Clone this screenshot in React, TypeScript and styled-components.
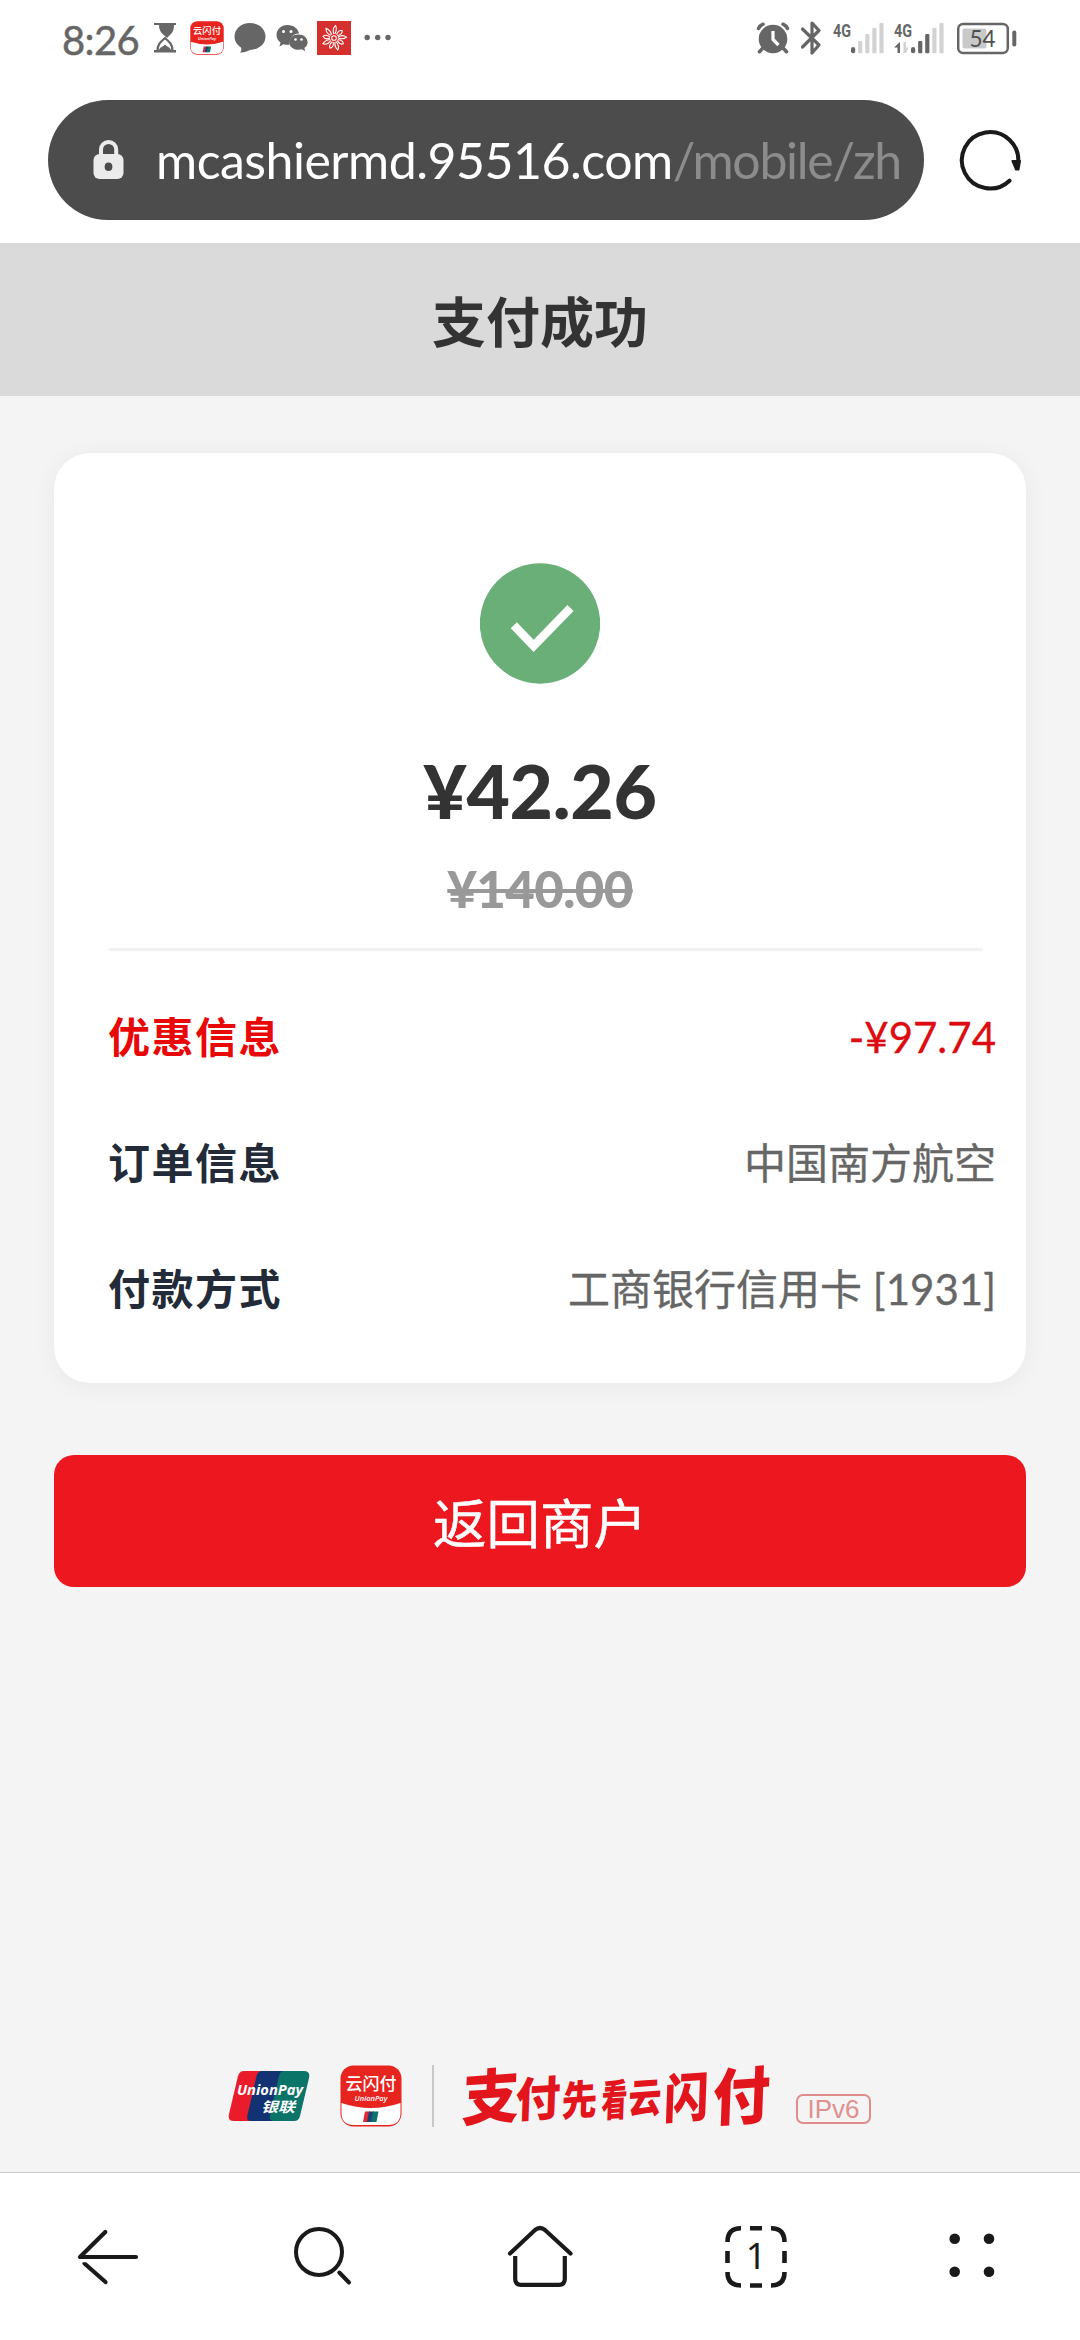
import React from "react";
import styled, { createGlobalStyle } from "styled-components";

const GlobalStyle = createGlobalStyle`
  * { box-sizing: border-box; }
  html, body { margin: 0; padding: 0; background: #f4f4f4; }
  body { font-family: Lato, "Noto Sans CJK SC", sans-serif; }
`;

const ink = "#1a1a1a";
const gray = "#666";
const faint = "#d2d2d2";

const Screen = styled.div`
  width: 1080px;
  height: 2340px;
  display: flex;
  flex-direction: column;
  background: #f4f4f4;
  overflow: hidden;
`;

const StatusBar = styled.div`
  height: 76px;
  flex: none;
  display: flex;
  align-items: center;
  justify-content: space-between;
  padding: 0 62px 0 61px;
  background: #fff;
`;

const StatusGroup = styled.div`
  display: flex;
  align-items: center;
`;

const Clock = styled.span`
  width: 81px;
  margin-right: 11px;
  font-size: 40px;
  line-height: 40px;
  letter-spacing: -0.6px;
  color: ${gray};
  -webkit-text-stroke: 0.5px ${gray};
  padding: 3px 0 0 1px;
`;

const Glyph = styled.svg<{ $w: number; $h: number; $gap?: number }>`
  display: block;
  flex: none;
  width: ${(p) => p.$w}px;
  height: ${(p) => p.$h}px;
  margin-right: ${(p) => p.$gap ?? 0}px;
`;

const AddressRow = styled.div`
  height: 167px;
  flex: none;
  display: flex;
  align-items: center;
  gap: 34px;
  padding: 0 48px;
  background: #fff;
`;

const AddressPill = styled.div`
  width: 876px;
  height: 120px;
  display: flex;
  align-items: center;
  padding-left: 45px;
  border-radius: 60px;
  background: #4c4c4c;
`;

const Url = styled.div`
  margin-left: 32px;
  padding-top: 1px;
  font-size: 50px;
  line-height: 60px;
  letter-spacing: -0.5px;
  white-space: nowrap;
  color: #fff;
`;

const UrlPath = styled.span`
  letter-spacing: -1.3px;
  color: #8c8c8c;
`;

const TitleBar = styled.header`
  height: 153px;
  flex: none;
  display: flex;
  align-items: center;
  justify-content: center;
  padding-top: 7px;
  background: #dadada;
  color: #333;
  font-size: 54px;
  line-height: 60px;
  font-weight: 700;
`;

const Content = styled.main`
  flex: 1;
  display: flex;
  flex-direction: column;
  padding: 57px 54px 0;
`;

const Card = styled.section`
  height: 930px;
  flex: none;
  display: flex;
  flex-direction: column;
  align-items: center;
  padding: 110px 30px 0 55px;
  border-radius: 36px;
  background: #fff;
  box-shadow: 0 3px 24px rgba(0, 0, 0, 0.05);
`;

const Summary = styled.div`
  align-self: stretch;
  display: flex;
  flex-direction: column;
  align-items: center;
  height: 385px;
  padding-right: 25px;
  flex: none;
`;

const Amount = styled.div`
  margin-top: 61px;
  font-size: 75px;
  line-height: 90px;
  font-weight: 900;
  letter-spacing: -0.3px;
  color: #333;
`;

const OriginalAmount = styled.div`
  margin-top: 24px;
  font-size: 51px;
  line-height: 60px;
  font-weight: 900;
  letter-spacing: -0.6px;
  color: #999;
  text-decoration: line-through;
  text-decoration-thickness: 4px;
`;

const Divider = styled.hr`
  align-self: flex-start;
  width: 874px;
  height: 3px;
  flex: none;
  margin: 0 0 23px;
  border: 0;
  background: #f2f2f2;
`;

const InfoRow = styled.div<{ $accent?: boolean }>`
  align-self: stretch;
  height: 126px;
  display: flex;
  align-items: center;
  justify-content: space-between;
  line-height: 60px;
  font-size: 42px;
  color: ${(p) => (p.$accent ? "#dc0c12" : gray)};
`;

const InfoLabel = styled.span<{ $accent?: boolean }>`
  margin-left: -1px;
  font-weight: 700;
  letter-spacing: 1.5px;
  color: ${(p) => (p.$accent ? "#e80808" : "#222b37")};
`;

const InfoValue = styled.span`
  -webkit-text-stroke: 0.3px currentColor;
`;

const ReturnButton = styled.button`
  height: 132px;
  flex: none;
  margin-top: 72px;
  padding: 4px 0 0;
  border: 0;
  border-radius: 20px;
  background: #ed181f;
  color: #fff;
  font: 400 53.500px/60px Lato, "Noto Sans CJK SC", sans-serif;
  -webkit-text-stroke: 0.5px #fff;
`;

const Brand = styled.footer`
  height: 62px;
  display: flex;
  align-items: center;
  margin: auto 0 45px 174px;
`;

const BrandRule = styled.div`
  width: 2px;
  height: 62px;
  margin: 0 30px 0 30px;
  background: #c8c8c8;
`;

const Slogan = styled.div`
  width: 308px;
  height: 62px;
  display: flex;
  align-items: center;
`;

const Brush = styled.span<{ $size: number; $w: number; $drop: number; $narrow: number }>`
  width: ${(p) => p.$w}px;
  display: flex;
  justify-content: center;
  font-size: ${(p) => p.$size}px;
  line-height: 62px;
  font-weight: 900;
  color: #e2151d;
  white-space: nowrap;
  transform: translateY(${(p) => p.$drop}px) skewX(-6deg) rotate(-4deg) scaleX(${(p) => p.$narrow});
`;

const Ipv6 = styled.span`
  width: 75px;
  height: 30px;
  align-self: flex-end;
  margin: 0 0 3px 24px;
  display: flex;
  align-items: center;
  justify-content: center;
  border: 2px solid #e08c8c;
  border-radius: 7px;
  color: #e09090;
  font: 400 26px/28px "Liberation Sans", Arial, sans-serif;
`;

const NavBar = styled.nav`
  height: 168px;
  flex: none;
  display: grid;
  grid-template-columns: repeat(5, 216px);
  align-items: center;
  justify-items: center;
  border-top: 1px solid #ccc;
  background: #fff;
`;

const brushes = [
  { ch: "支", size: 60, w: 54, drop: 0, narrow: 0.95 },
  { ch: "付", size: 47, w: 40, drop: 2, narrow: 0.95 },
  { ch: "先", size: 41, w: 43, drop: 4, narrow: 0.86 },
  { ch: "看", size: 43, w: 27, drop: 4, narrow: 0.6 },
  { ch: "云", size: 41, w: 34, drop: 2, narrow: 0.8 },
  { ch: "闪", size: 53, w: 49, drop: 1, narrow: 0.84 },
  { ch: "付", size: 62, w: 61, drop: -1, narrow: 0.92 },
];

const rows = [
  { label: "优惠信息", value: "-¥97.74", accent: true },
  { label: "订单信息", value: "中国南方航空" },
  { label: "付款方式", value: "工商银行信用卡 [1931]" },
];

const Hourglass = () => (
  <Glyph $w={24} $h={34} $gap={13} viewBox="153 21 24 34">
    <path d="M154 23h22v2h-2c0 7-3 9-7 13-4-4-8-6-8-13h-5z" fill={gray} />
    <path d="M157.500 51c0-7 3-9 7.500-13 4.500 4 7.500 6 7.500 13" fill="none" stroke={gray} strokeWidth="2.200" />
    <path d="M159 50c1-3 4-3 6-5.500 2 2.500 5 2.500 6 5.500zM154 50h22v2.500h-22z" fill={gray} />
  </Glyph>
);

const CloudPay = ({ size, gap }: { size: number; gap?: number }) => (
  <Glyph $w={size} $h={size} $gap={gap} viewBox="0 0 62 62">
    <rect x="0.500" y="0.500" width="61" height="61" rx="13" fill="#e8241f" />
    <path d="M1.500 38Q31 48 60.500 38V48Q60.500 60 48 60H14Q1.500 60 1.500 48Z" fill="#fff" />
    <text x="31" y="24.500" textAnchor="middle" fontFamily="Noto Sans CJK SC" fontSize="17" fontWeight="500" fill="#fff">云闪付</text>
    <text x="31" y="35.500" textAnchor="middle" fontFamily="Open Sans" fontStyle="italic" fontWeight="600" fontSize="7.500" fill="#fff">UnionPay</text>
    <path d="M25 46.500h5l-2 10.500h-5z" fill="#e02a35" />
    <path d="M29 46.500h5l-2 10.500h-5z" fill="#1d3f77" />
    <path d="M33 46.500h5.500l-2 10.500H31z" fill="#0b7468" />
  </Glyph>
);

const Bubble = () => (
  <Glyph $w={32} $h={34} $gap={10} viewBox="233.500 21 32 34">
    <path d="M249.500 23C258.500 23 265 29 265 36.500S258.500 49.500 249.500 50C246 51.500 243 53 239.500 52.500C241 51 241 49.500 240.500 47.500C236.500 45 234 41 234 36.500C234 29 240.500 23 249.500 23Z" fill={gray} />
  </Glyph>
);

const WeChat = () => (
  <Glyph $w={32} $h={34} $gap={9} viewBox="275 21 32 34">
    <path d="M286.500 25C280 25 275.500 29.500 275.500 35c0 3 1.500 5.500 4 7.500l-1 4 4-2.200c2 .5 4 .7 6 .4-1-7 5-11.700 9.500-11.200C297 28.500 292.500 25 286.500 25Z" fill={gray} />
    <path d="M297.500 34.500c-5.500 0-9.300 3.500-9.300 7.700s3.800 7.600 9.300 7.600c1.200 0 2.400-.2 3.400-.5l3.300 1.900-.8-3.200c2-1.500 3.200-3.400 3.200-5.800 0-4.200-3.800-7.700-9.100-7.700Z" fill={gray} />
    <g fill="#fff"><circle cx="282.500" cy="31.500" r="1.500" /><circle cx="290" cy="31.500" r="1.500" /><circle cx="294.500" cy="39.500" r="1.300" /><circle cx="300.500" cy="39.500" r="1.300" /></g>
  </Glyph>
);

const Flower = () => (
  <Glyph $w={34} $h={34} $gap={13} viewBox="-17 -17 34 34">
    <rect x="-17" y="-17" width="34" height="34" fill="#d5302d" />
    <g fill="none" stroke="#fff" strokeWidth="1.100">
      {[5, 48, 84, 122, 160, 200, 240, 278, 318].map((a, i) => (
        <path key={a} transform={`rotate(${a})`} d={i % 2 ? "M-.5-4C-2.500-7-2-9.500 0-11C2-9.500 2-7 .5-4" : "M-.5-4C-2-7-2-10 .5-12.500C2-10 1.800-7 .5-4"} />
      ))}
      <circle r="2.300" />
    </g>
  </Glyph>
);

const More = () => (
  <Glyph $w={28} $h={34} viewBox="363 21 28 34">
    <g fill={gray}><circle cx="366.200" cy="37.500" r="2.700" /><circle cx="376.700" cy="37.500" r="2.700" /><circle cx="387" cy="37.500" r="2.700" /></g>
  </Glyph>
);

const Alarm = () => (
  <Glyph $w={34} $h={36} $gap={10} viewBox="756 19 34 36">
    <circle cx="773" cy="38" r="14.300" fill={gray} />
    <path d="M758.500 27.500q1.500-3 4.500-4.300M787.500 27.500q-1.500-3-4.500-4.300M762.500 47.500l-3 3.200M783.500 47.500l3 3.200" fill="none" stroke={gray} strokeWidth="3.500" strokeLinecap="round" />
    <path d="M773 30v8.500l5.500 5.500" fill="none" stroke="#fff" strokeWidth="3.200" strokeLinejoin="round" />
  </Glyph>
);

const Bluetooth = () => (
  <Glyph $w={22} $h={36} $gap={11} viewBox="800 19 22 36">
    <path d="M802.500 28l16.500 16-7 8V22l7 7.500-16.500 16.500" fill="none" stroke={gray} strokeWidth="3.200" strokeLinejoin="round" strokeLinecap="round" />
  </Glyph>
);

const barTops = [46, 40, 33, 27, 22];

const Signal = ({ lit, start, data, gap }: { lit: number; start: number; data?: boolean; gap: number }) => (
  <Glyph $w={start + 33} $h={36} $gap={gap} viewBox={`0 19 ${start + 33} 36`}>
    <text x="0" y="35.500" fontFamily="Roboto" fontWeight="700" fontSize="18.500" textLength="18" lengthAdjust="spacingAndGlyphs" fill={gray}>4G</text>
    {data && <path d="M6 41v11H3.500v-5.500H0z" fill={gray} />}
    {data && <path d="M9.500 41v11H12l2.500-5.500h-2.500v-5.500z" fill={faint} />}
    {barTops.map((top, i) => (
      <rect key={top} x={start + i * 7.100} y={top} width="4.200" height={52.300 - top} rx={i === 0 ? 2.100 : 1} fill={i < lit ? gray : faint} />
    ))}
  </Glyph>
);

const Battery = () => (
  <Glyph $w={61} $h={36} viewBox="957 19 61 36">
    <rect x="958.200" y="23" width="49.600" height="29" rx="5" fill="none" stroke={gray} strokeWidth="2.500" />
    <rect x="962.500" y="27.500" width="24" height="20" rx="2" fill="#c9c9c9" />
    <rect x="1012.300" y="29.500" width="4" height="16" rx="1.800" fill={gray} />
    <text x="982.500" y="45.800" textAnchor="middle" fontFamily="Lato" fontSize="22.500" fill="#505050">54</text>
  </Glyph>
);

const Lock = () => (
  <Glyph $w={31} $h={42} viewBox="93 139 31 42">
    <path d="M101 156v-6.500a7.600 7.600 0 0 1 15.200 0v6.500" fill="none" stroke="#ebebeb" strokeWidth="4" />
    <path d="M99.500 154h18a6 6 0 0 1 6 6v13a6 6 0 0 1-6 6h-18a6 6 0 0 1-6-6v-13a6 6 0 0 1 6-6z" fill="#ebebeb" />
    <rect x="104.700" y="162.500" width="7.600" height="8.600" rx="3.800" fill="#4c4c4c" />
  </Glyph>
);

const Reload = () => (
  <Glyph $w={64} $h={64} viewBox="958 127 64 64">
    <path d="M1009.500 179.700A28.200 28.200 0 1 1 1018 163" fill="none" stroke={ink} strokeWidth="4" strokeLinecap="round" />
    <path d="M1012.500 160h7.500l-1.500 8.500-2.500 0z" fill={ink} stroke={ink} strokeWidth="2" strokeLinejoin="round" />
  </Glyph>
);

const Success = () => (
  <Glyph $w={120} $h={121} viewBox="480 563 120 121">
    <circle cx="540" cy="623.500" r="60.200" fill="#6aaf78" />
    <path d="M513.800 625.300L533.600 646L570.500 608" fill="none" stroke="#fff" strokeWidth="8.500" />
  </Glyph>
);

const UnionPay = () => (
  <Glyph $w={82} $h={52} $gap={30} viewBox="0 0 82 52">
    <path d="M16 1H34L24 51H6Q-.5 51 1 44L10 6Q11.500 1 16 1Z" fill="#ea1c2c" />
    <path d="M34 1H56L46 51H23Q18 51 19.500 45L28.500 6Q30 1 34 1Z" fill="#123274" />
    <path d="M56 1H76Q82.500 1 81 8L72 46Q71 51 66 51H46Q40.500 51 42 45L51 6Q52 1 56 1Z" fill="#0b7468" />
    <text x="9" y="25" fontFamily="Open Sans" fontWeight="700" fontStyle="italic" fontSize="15" textLength="66" lengthAdjust="spacingAndGlyphs" fill="#fff">UnionPay</text>
    <text x="33" y="41.500" fontFamily="Noto Sans CJK SC" fontWeight="700" fontStyle="italic" fontSize="14" textLength="34" lengthAdjust="spacingAndGlyphs" fill="#fff">银联</text>
  </Glyph>
);

const Back = () => (
  <Glyph $w={64} $h={64} viewBox="76 2225 64 64">
    <path d="M105.300 2232L80 2257h56M84.500 2263.500L105.500 2282" fill="none" stroke={ink} strokeWidth="4.200" strokeLinecap="round" strokeLinejoin="round" />
    <path d="M79 2261h10" stroke="#fff" strokeWidth="2.500" />
  </Glyph>
);

const Search = () => (
  <Glyph $w={64} $h={64} viewBox="292 2225 64 64">
    <circle cx="319" cy="2252" r="23" fill="none" stroke={ink} strokeWidth="4" />
    <path d="M339.300 2272.500L349 2282.500" stroke={ink} strokeWidth="4" strokeLinecap="round" />
  </Glyph>
);

const Home = () => (
  <Glyph $w={68} $h={64} viewBox="506 2225 68 64">
    <path d="M510 2253.500L535 2230Q540 2226 545 2230L570.500 2253.500" fill="none" stroke={ink} strokeWidth="4.200" strokeLinecap="round" />
    <path d="M515.200 2256V2279Q515.200 2284.800 521 2284.800H559Q564.800 2284.800 564.800 2279V2256" fill="none" stroke={ink} strokeWidth="4.200" />
  </Glyph>
);

const Tabs = () => (
  <Glyph $w={64} $h={64} viewBox="724 2225 64 64">
    <path d="M727.500 2242q0-13.700 13.500-13.700M771 2228.300q13.500 0 13.500 13.700M784.500 2272q0 13.500-13.500 13.500M741 2285.500q-13.500 0-13.500-13.500M750 2228.300h12M750 2285.500h12M727.500 2251v12M784.500 2251v12" fill="none" stroke={ink} strokeWidth="4.600" />
    <text x="756" y="2269" textAnchor="middle" fontFamily="Noto Sans" fontSize="36" fill={ink}>1</text>
  </Glyph>
);

const Menu = () => (
  <Glyph $w={64} $h={64} viewBox="940 2225 64 64">
    <g fill={ink}><circle cx="954.700" cy="2238.700" r="5.300" /><circle cx="989" cy="2238.700" r="5.300" /><circle cx="954.700" cy="2271.700" r="5.300" /><circle cx="989" cy="2271.700" r="5.300" /></g>
  </Glyph>
);

export default function App() {
  return (
    <Screen>
      <GlobalStyle />
      <StatusBar>
        <StatusGroup>
          <Clock>8:26</Clock>
          <Hourglass />
          <CloudPay size={34} gap={9.5} />
          <Bubble />
          <WeChat />
          <Flower />
          <More />
        </StatusGroup>
        <StatusGroup>
          <Alarm />
          <Bluetooth />
          <Signal lit={1} start={18} gap={10} />
          <Signal lit={3} start={17} data gap={13} />
          <Battery />
        </StatusGroup>
      </StatusBar>
      <AddressRow>
        <AddressPill>
          <Lock />
          <Url>
            mcashiermd.95516.com<UrlPath>/mobile/zh</UrlPath>
          </Url>
        </AddressPill>
        <Reload />
      </AddressRow>
      <TitleBar>支付成功</TitleBar>
      <Content>
        <Card>
          <Summary>
            <Success />
            <Amount>¥42.26</Amount>
            <OriginalAmount>¥140.00</OriginalAmount>
          </Summary>
          <Divider />
          {rows.map((r) => (
            <InfoRow key={r.label} $accent={r.accent}>
              <InfoLabel $accent={r.accent}>{r.label}</InfoLabel>
              <InfoValue>{r.value}</InfoValue>
            </InfoRow>
          ))}
        </Card>
        <ReturnButton>返回商户</ReturnButton>
        <Brand>
          <UnionPay />
          <CloudPay size={62} />
          <BrandRule />
          <Slogan>
            {brushes.map((b, i) => (
              <Brush key={i} $size={b.size} $w={b.w} $drop={b.drop} $narrow={b.narrow}>
                {b.ch}
              </Brush>
            ))}
          </Slogan>
          <Ipv6>IPv6</Ipv6>
        </Brand>
      </Content>
      <NavBar>
        <Back />
        <Search />
        <Home />
        <Tabs />
        <Menu />
      </NavBar>
    </Screen>
  );
}
